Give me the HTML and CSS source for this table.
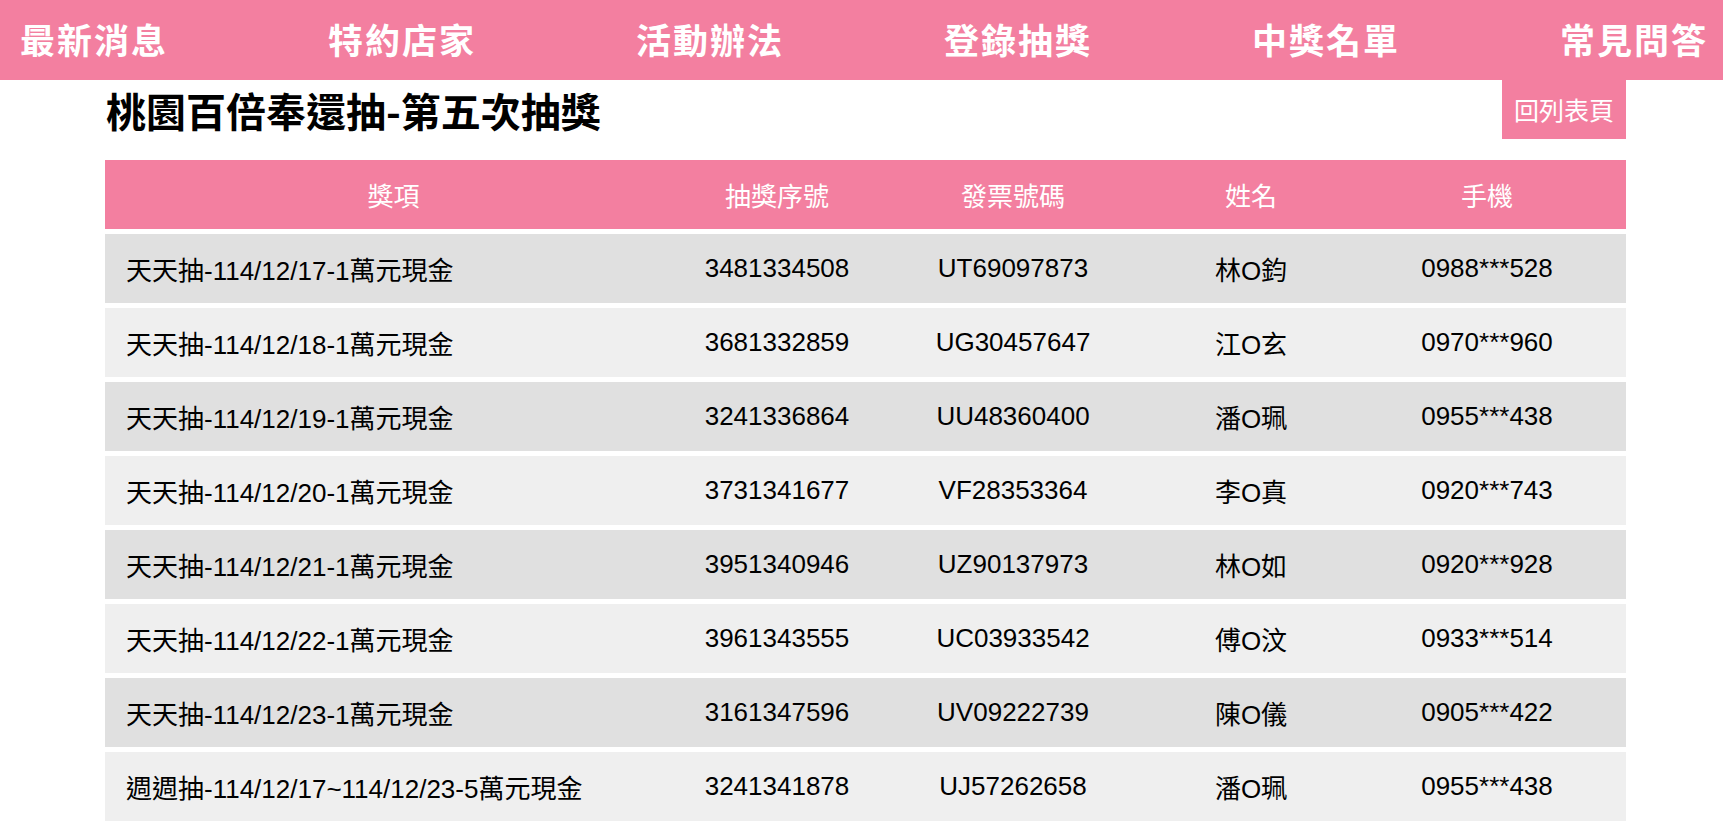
FILE: index.html
```html
<!DOCTYPE html>
<html lang="zh-Hant">
<head>
<meta charset="utf-8">
<title>桃園百倍奉還抽-第五次抽獎</title>
<link rel="stylesheet" href="styles.css">
</head>
<body>
<nav class="nav">
  <a class="nav-item" href="#">最新消息</a>
  <a class="nav-item" href="#">特約店家</a>
  <a class="nav-item" href="#">活動辦法</a>
  <a class="nav-item" href="#">登錄抽獎</a>
  <a class="nav-item" href="#">中獎名單</a>
  <a class="nav-item" href="#">常見問答</a>
</nav>
<main class="container">
  <div class="title-row">
    <h1 class="title">桃園百倍奉還抽-第五次抽獎</h1>
    <a class="back-btn" href="#">回列表頁</a>
  </div>
  <table class="winners">
    <colgroup>
      <col class="c1"><col class="c2"><col class="c3"><col class="c4"><col class="c5">
    </colgroup>
    <thead>
      <tr><th>獎項</th><th>抽獎序號</th><th>發票號碼</th><th>姓名</th><th>手機</th></tr>
    </thead>
    <tbody>
      <tr><td class="prize">天天抽-114/12/17-1萬元現金</td><td>3481334508</td><td>UT69097873</td><td>林O鈞</td><td>0988***528</td></tr>
      <tr><td class="prize">天天抽-114/12/18-1萬元現金</td><td>3681332859</td><td>UG30457647</td><td>江O玄</td><td>0970***960</td></tr>
      <tr><td class="prize">天天抽-114/12/19-1萬元現金</td><td>3241336864</td><td>UU48360400</td><td>潘O珮</td><td>0955***438</td></tr>
      <tr><td class="prize">天天抽-114/12/20-1萬元現金</td><td>3731341677</td><td>VF28353364</td><td>李O真</td><td>0920***743</td></tr>
      <tr><td class="prize">天天抽-114/12/21-1萬元現金</td><td>3951340946</td><td>UZ90137973</td><td>林O如</td><td>0920***928</td></tr>
      <tr><td class="prize">天天抽-114/12/22-1萬元現金</td><td>3961343555</td><td>UC03933542</td><td>傅O汶</td><td>0933***514</td></tr>
      <tr><td class="prize">天天抽-114/12/23-1萬元現金</td><td>3161347596</td><td>UV09222739</td><td>陳O儀</td><td>0905***422</td></tr>
      <tr><td class="prize">週週抽-114/12/17~114/12/23-5萬元現金</td><td>3241341878</td><td>UJ57262658</td><td>潘O珮</td><td>0955***438</td></tr>
    </tbody>
  </table>
</main>
</body>
</html>
```
FILE: styles.css
```css
html, body {
  margin: 0;
  padding: 0;
  background: #ffffff;
}

body {
  font-family: "Liberation Sans", Arial, "Noto Sans CJK TC", sans-serif;
  color: #000;
}

.nav {
  height: 80px;
  background: #f37fa0;
  display: flex;
  justify-content: space-between;
  align-items: center;
  padding: 0 15px 0 20px;
}

.nav-item {
  color: #ffffff;
  text-decoration: none;
  font-family: "Noto Sans CJK TC", sans-serif;
  font-weight: 700;
  font-size: 35px;
  letter-spacing: 2px;
  line-height: 1;
  padding-bottom: 3px;
}

.container {
  width: 1521px;
  margin: 0 0 0 105px;
}

.title-row {
  display: flex;
  justify-content: space-between;
  align-items: center;
  height: 59px;
}

.title {
  margin: 0;
  padding-left: 1px;
  font-family: "Noto Sans CJK TC", sans-serif;
  font-weight: 700;
  font-size: 40px;
  line-height: 1;
  color: #000;
}

.back-btn {
  display: block;
  height: 59px;
  line-height: 59px;
  padding: 0 12px;
  background: #f37fa0;
  color: #ffffff;
  text-decoration: none;
  font-family: "Noto Sans CJK TC", sans-serif;
  font-size: 25px;
  font-weight: 400;
}

.winners {
  width: 100%;
  margin-top: 16px;
  table-layout: fixed;
  border-collapse: separate;
  border-spacing: 0 5px;
  font-size: 26px;
}

.c1 { width: 577px; }
.c2 { width: 190px; }
.c3 { width: 282px; }
.c4 { width: 194px; }
.c5 { width: 278px; }

.winners th {
  height: 69px;
  padding: 0;
  background: #f37fa0;
  color: #ffffff;
  font-weight: 400;
  text-align: center;
  font-family: "Liberation Sans", "Noto Sans CJK TC", sans-serif;
}

.winners td {
  height: 69px;
  padding: 0;
  text-align: center;
  white-space: nowrap;
}

.winners tbody tr:nth-child(odd) td {
  background: #e0e0e0;
}

.winners tbody tr:nth-child(even) td {
  background: #efefef;
}

.winners td.prize {
  text-align: left;
  padding-left: 21px;
}
```
